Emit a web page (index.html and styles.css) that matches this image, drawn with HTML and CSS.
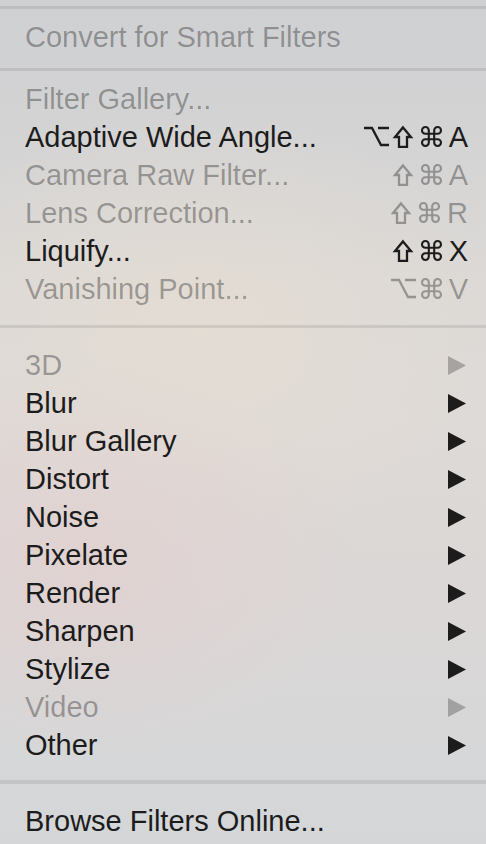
FILE: index.html
```html
<!DOCTYPE html>
<html>
<head>
<meta charset="utf-8">
<link rel="stylesheet" href="styles.css">
</head>
<body>
<div class="menu">
  <div class="top-space"></div>
  <div class="sep"></div>
  <div class="section s1">
    <div class="row disabled"><span class="label">Convert for Smart Filters</span></div>
  </div>
  <div class="sep"></div>
  <div class="section s2">
    <div class="row disabled"><span class="label">Filter Gallery...</span></div>
    <div class="row"><span class="label">Adaptive Wide Angle...</span><span class="keys"><svg class="opt" viewBox="0 0 25 21"><path d="M0 2 H8 L17 19 H25 M14 2 H25"/></svg><svg class="shift" viewBox="0 0 18 22"><path d="M9 1.4 L17 11 H13 V20.8 H5 V11 H1 Z"/></svg><svg class="cmd" viewBox="0 0 21 21"><path d="M7.8 7.8 V4.4 A3.4 3.4 0 1 0 4.4 7.8 H16.6 A3.4 3.4 0 1 0 13.2 4.4 V16.6 A3.4 3.4 0 1 0 16.6 13.2 H4.4 A3.4 3.4 0 1 0 7.8 16.6 Z"/></svg><span class="letter">A</span></span></div>
    <div class="row disabled"><span class="label">Camera Raw Filter...</span><span class="keys"><svg class="shift" viewBox="0 0 18 22"><path d="M9 1.4 L17 11 H13 V20.8 H5 V11 H1 Z"/></svg><svg class="cmd" viewBox="0 0 21 21"><path d="M7.8 7.8 V4.4 A3.4 3.4 0 1 0 4.4 7.8 H16.6 A3.4 3.4 0 1 0 13.2 4.4 V16.6 A3.4 3.4 0 1 0 16.6 13.2 H4.4 A3.4 3.4 0 1 0 7.8 16.6 Z"/></svg><span class="letter">A</span></span></div>
    <div class="row disabled"><span class="label">Lens Correction...</span><span class="keys"><svg class="shift" viewBox="0 0 18 22"><path d="M9 1.4 L17 11 H13 V20.8 H5 V11 H1 Z"/></svg><svg class="cmd" viewBox="0 0 21 21"><path d="M7.8 7.8 V4.4 A3.4 3.4 0 1 0 4.4 7.8 H16.6 A3.4 3.4 0 1 0 13.2 4.4 V16.6 A3.4 3.4 0 1 0 16.6 13.2 H4.4 A3.4 3.4 0 1 0 7.8 16.6 Z"/></svg><span class="letter">R</span></span></div>
    <div class="row"><span class="label">Liquify...</span><span class="keys"><svg class="shift" viewBox="0 0 18 22"><path d="M9 1.4 L17 11 H13 V20.8 H5 V11 H1 Z"/></svg><svg class="cmd" viewBox="0 0 21 21"><path d="M7.8 7.8 V4.4 A3.4 3.4 0 1 0 4.4 7.8 H16.6 A3.4 3.4 0 1 0 13.2 4.4 V16.6 A3.4 3.4 0 1 0 16.6 13.2 H4.4 A3.4 3.4 0 1 0 7.8 16.6 Z"/></svg><span class="letter">X</span></span></div>
    <div class="row disabled"><span class="label">Vanishing Point...</span><span class="keys"><svg class="opt" viewBox="0 0 25 21"><path d="M0 2 H8 L17 19 H25 M14 2 H25"/></svg><svg class="cmd" viewBox="0 0 21 21"><path d="M7.8 7.8 V4.4 A3.4 3.4 0 1 0 4.4 7.8 H16.6 A3.4 3.4 0 1 0 13.2 4.4 V16.6 A3.4 3.4 0 1 0 16.6 13.2 H4.4 A3.4 3.4 0 1 0 7.8 16.6 Z"/></svg><span class="letter">V</span></span></div>
  </div>
  <div class="sep"></div>
  <div class="section s3">
    <div class="row disabled"><span class="label">3D</span><svg class="arrow" viewBox="0 0 18 19"><path d="M0 0 L18 9.5 L0 19 Z"/></svg></div>
    <div class="row"><span class="label">Blur</span><svg class="arrow" viewBox="0 0 18 19"><path d="M0 0 L18 9.5 L0 19 Z"/></svg></div>
    <div class="row"><span class="label">Blur Gallery</span><svg class="arrow" viewBox="0 0 18 19"><path d="M0 0 L18 9.5 L0 19 Z"/></svg></div>
    <div class="row"><span class="label">Distort</span><svg class="arrow" viewBox="0 0 18 19"><path d="M0 0 L18 9.5 L0 19 Z"/></svg></div>
    <div class="row"><span class="label">Noise</span><svg class="arrow" viewBox="0 0 18 19"><path d="M0 0 L18 9.5 L0 19 Z"/></svg></div>
    <div class="row"><span class="label">Pixelate</span><svg class="arrow" viewBox="0 0 18 19"><path d="M0 0 L18 9.5 L0 19 Z"/></svg></div>
    <div class="row"><span class="label">Render</span><svg class="arrow" viewBox="0 0 18 19"><path d="M0 0 L18 9.5 L0 19 Z"/></svg></div>
    <div class="row"><span class="label">Sharpen</span><svg class="arrow" viewBox="0 0 18 19"><path d="M0 0 L18 9.5 L0 19 Z"/></svg></div>
    <div class="row"><span class="label">Stylize</span><svg class="arrow" viewBox="0 0 18 19"><path d="M0 0 L18 9.5 L0 19 Z"/></svg></div>
    <div class="row disabled"><span class="label">Video</span><svg class="arrow" viewBox="0 0 18 19"><path d="M0 0 L18 9.5 L0 19 Z"/></svg></div>
    <div class="row"><span class="label">Other</span><svg class="arrow" viewBox="0 0 18 19"><path d="M0 0 L18 9.5 L0 19 Z"/></svg></div>
  </div>
  <div class="sep sep-thick"></div>
  <div class="section s4">
    <div class="row"><span class="label">Browse Filters Online...</span></div>
  </div>
</div>
</body>
</html>
```
FILE: styles.css
```css
html, body {
  margin: 0;
  padding: 0;
}
body {
  width: 486px;
  height: 844px;
  overflow: hidden;
  font-family: "Liberation Sans", Arial, sans-serif;
  background:
    radial-gradient(ellipse 260px 200px at 90px 560px, rgba(228, 205, 205, 0.55), rgba(228, 205, 205, 0) 100%),
    radial-gradient(ellipse 300px 220px at 200px 330px, rgba(232, 222, 210, 0.6), rgba(232, 222, 210, 0) 100%),
    linear-gradient(to bottom, #cfd0d2 0px, #d3d3d4 120px, #dcd9d6 280px, #dedad7 420px, #dbd7d6 600px, #d6d7d8 760px, #d4d6d8 844px);
}
.menu {
  display: flex;
  flex-direction: column;
  width: 486px;
}
.top-space {
  height: 6px;
}
.sep {
  height: 3px;
  background: rgba(0, 0, 0, 0.085);
}
.sep-thick {
  height: 4px;
}
.section {
  display: flex;
  flex-direction: column;
}
.s1 { padding: 9px 0 12px; }
.s2 { padding: 9px 0 17px; }
.s3 { padding: 18px 0 16px; }
.s4 { padding: 18px 0 0; }
.row {
  height: 38px;
  display: flex;
  align-items: center;
  justify-content: space-between;
  padding: 0 18px 0 25px;
  font-size: 29px;
  line-height: 38px;
  color: #1c1c1c;
}
.row.disabled {
  color: rgba(0, 0, 0, 0.32);
}
.label {
  white-space: nowrap;
}
.keys {
  display: flex;
  align-items: center;
  flex-shrink: 0;
}
.keys svg {
  flex-shrink: 0;
  fill: none;
  stroke: currentColor;
  stroke-width: 2.3;
  overflow: visible;
  margin-top: -1px;
}
.opt {
  width: 25px;
  height: 21px;
  margin-right: 5px;
}
.shift {
  width: 18px;
  height: 22px;
  margin-right: 9px;
  stroke-linejoin: miter;
}
.cmd {
  width: 21px;
  height: 21px;
  margin-right: 7px;
}
.keys .cmd {
  stroke-width: 2.1;
}
.letter {
  display: block;
  line-height: 38px;
}
.arrow {
  flex-shrink: 0;
  width: 18px;
  height: 19px;
  margin-right: 2px;
  fill: #1c1c1c;
}
.disabled .arrow {
  fill: rgba(0, 0, 0, 0.25);
}
```
